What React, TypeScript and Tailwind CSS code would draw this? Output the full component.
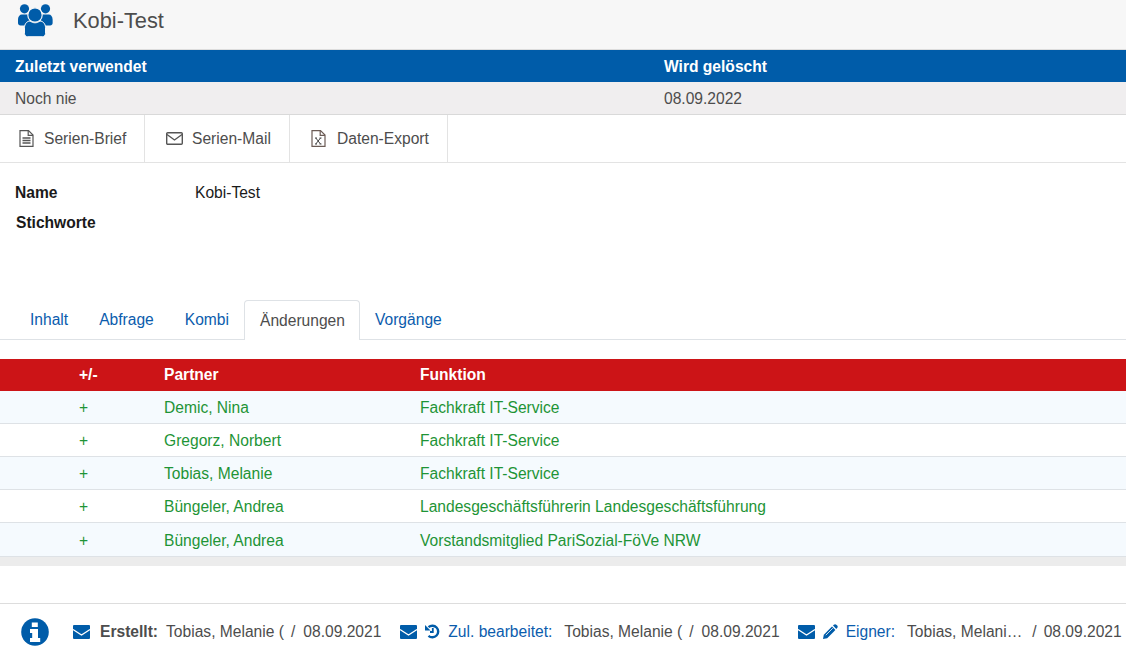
import React from "react";

const rows = [
  ["Demic, Nina", "Fachkraft IT-Service"],
  ["Gregorz, Norbert", "Fachkraft IT-Service"],
  ["Tobias, Melanie", "Fachkraft IT-Service"],
  ["Büngeler, Andrea", "Landesgeschäftsführerin Landesgeschäftsführung"],
  ["Büngeler, Andrea", "Vorstandsmitglied PariSozial-FöVe NRW"],
];

function Users() {
  return (
    <svg viewBox="0 0 35 33" className="w-[35px] h-[33px] text-[#005ca9]" fill="currentColor">
      <circle cx="6.5" cy="4.8" r="4.6" />
      <circle cx="27.5" cy="4.8" r="4.6" />
      <path d="M0 15.5c0-3 1.6-5 4-5h6c2 0 3 1 4 3l-6 8H2.5C1 21.5 0 20.5 0 19z" />
      <path d="M34.6 15.5c0-3-1.6-5-4-5h-6c-2 0-3 1-4 3l6 8h5.500c1.500 0 2.500-1 2.500-2.500z" />
      <circle cx="17" cy="11" r="7.2" stroke="#f7f7f7" strokeWidth="1.2" />
      <path d="M6.500 23.500c0-3.500 2.500-6.500 5.500-6.500 1.500 1 3 1.800 5 1.800s3.500-.8 5-1.800c3 0 5.500 3 5.500 6.500v6c0 2-1.500 3.200-3 3.200H9.500c-1.500 0-3-1.200-3-3.200z" stroke="#f7f7f7" strokeWidth="1" />
    </svg>
  );
}

function Envelope() {
  return (
    <svg viewBox="0 0 17 14" className="w-[17px] h-[14px] shrink-0 text-[#005ca9]">
      <rect width="17" height="14" rx="1" fill="currentColor" />
      <path d="M0 4.500 8.500 10 17 4.500" fill="none" stroke="#fff" strokeWidth="1.300" />
    </svg>
  );
}

function Info() {
  return (
    <svg viewBox="0 0 28 28" className="w-[28px] h-[28px] shrink-0">
      <circle cx="14" cy="14" r="13.800" fill="#005ca9" />
      <path d="M10.800 4.500h6v4.500h-6zM9 11h8v9h2.200v4H9v-4h2.200v-5H9z" fill="#fff" />
    </svg>
  );
}

function HistoryIcon() {
  return (
    <svg viewBox="0 0 15 15" className="w-[15px] h-[15px] shrink-0 text-[#005ca9]" fill="none" stroke="currentColor">
      <path d="M3.500 3.200A5.800 5.800 0 1 1 3.500 11.800" strokeWidth="2.400" />
      <path d="M0 1v5.500h5.500z" fill="currentColor" stroke="none" />
      <path d="M7.800 4v4H5" strokeWidth="1.800" />
    </svg>
  );
}

function Pencil() {
  return (
    <svg viewBox="0 0 15 15" className="w-[15px] h-[15px] shrink-0 text-[#005ca9]" fill="currentColor">
      <path d="M0 15l.8-4.200L9 2.600l3.400 3.400-8.200 8.200z" />
      <path d="M10 1.600l.8-.8c.8-.8 1.800-.8 2.500-.1l.9.900c.7.7.7 1.800-.1 2.500l-.8.800z" />
      <path d="M2.800 11.200l7-7" stroke="#fff" strokeWidth=".8" fill="none" />
    </svg>
  );
}

function FileText() {
  return (
    <svg viewBox="0 0 15 17" className="w-[15px] h-[17px] shrink-0" fill="none" stroke="#555" strokeWidth="1.200">
      <path d="M1 .6h8.500L14 5v11.400H1z" />
      <path d="M9.200.8v4.500H14" />
      <path d="M3.500 8h8M3.500 10.500h8M3.500 13h8" strokeWidth="1.300" />
    </svg>
  );
}

function MailOutline() {
  return (
    <svg viewBox="0 0 17 13" className="w-[17px] h-[13px] shrink-0" fill="none" stroke="#555" strokeWidth="1.400">
      <rect x=".7" y=".7" width="15.600" height="11.600" rx="1" />
      <path d="M1 2.500 8.500 8 16 2.500" />
    </svg>
  );
}

function FileX() {
  return (
    <svg viewBox="0 0 15 17" className="w-[15px] h-[17px] shrink-0" fill="none" stroke="#6b5b55" strokeWidth="1.200">
      <path d="M1 .6h8.500L14 5v11.400H1z" />
      <path d="M9.200.8v4.500H14" />
      <path d="M4.800 8l4.700 6M9.500 8l-4.700 6M4 8h2M8.500 8h2M4 14h2M8.500 14h2" stroke="#444" strokeWidth="1" />
    </svg>
  );
}

export default function App() {
  return (
    <div className="w-[1126px] h-[653px] overflow-hidden bg-white text-[15.6px] text-[#4d4d4d] font-['Liberation_Sans',Arial,sans-serif] flex flex-col">
      <header className="h-[50px] shrink-0 bg-[#f7f7f7] border-b border-[#dddddd] flex items-center pl-[18px] pb-[8px]">
        <Users />
        <span className="ml-[20px] mt-[2px] text-[21.8px] text-[#4d4d4d]">Kobi-Test</span>
      </header>
      <div className="h-[32px] shrink-0 bg-[#005ca9] text-white font-bold grid grid-cols-[649px_1fr] items-center pl-[15px] pt-[1px]">
        <span>Zuletzt verwendet</span>
        <span>Wird gelöscht</span>
      </div>
      <div className="h-[33px] shrink-0 bg-[#f0eeef] border-b border-[#d9d9d9] grid grid-cols-[649px_1fr] items-center pl-[15px] pt-[1px]">
        <span>Noch nie</span>
        <span>08.09.2022</span>
      </div>
      <nav className="h-[48px] shrink-0 border-b border-[#e3e3e3] flex">
        <div className="w-[145px] border-r border-[#e3e3e3] flex items-center pl-[19px] gap-[10px]">
          <FileText /><span>Serien-Brief</span>
        </div>
        <div className="w-[145px] border-r border-[#e3e3e3] flex items-center pl-[21px] gap-[9px]">
          <MailOutline /><span>Serien-Mail</span>
        </div>
        <div className="w-[158px] border-r border-[#e3e3e3] flex items-center pl-[21px] gap-[11px]">
          <FileX /><span>Daten-Export</span>
        </div>
      </nav>
      <section className="h-[137px] shrink-0 pt-[15px] pl-[15px] text-[#1a1a1a]">
        <div className="h-[30px] flex items-center"><b className="w-[180px]">Name</b><span>Kobi-Test</span></div>
        <div className="h-[30px] flex items-center"><b className="w-[180px] pl-[1px]">Stichworte</b></div>
      </section>
      <div className="h-[40px] shrink-0 border-b border-[#dee2e6] flex pl-[15px] text-[#0b5cad]">
        <span className="px-[15px] pt-[8px]">Inhalt</span>
        <span className="ml-[1px] px-[15px] pt-[8px]">Abfrage</span>
        <span className="ml-[1px] px-[15px] pt-[8px]">Kombi</span>
        <span className="h-[40px] pl-[15px] pr-[14px] pt-[8px] text-[#4d4d4d] bg-white border border-b-0 border-[#dee2e6] rounded-t-[4px]">Änderungen</span>
        <span className="px-[15px] pt-[8px]">Vorgänge</span>
      </div>
      <div className="h-[19px] shrink-0" />
      <div className="h-[32px] shrink-0 bg-[#cc1417] text-white font-bold grid grid-cols-[79px_85px_256px_1fr] items-center">
        <span /><span>+/-</span><span>Partner</span><span>Funktion</span>
      </div>
      {rows.map((r, i) => (
        <div key={i} className={`shrink-0 border-b border-[#dee2e6] text-[#1e9436] grid grid-cols-[79px_85px_256px_1fr] items-center ${i === 4 ? "h-[34px] pt-[2px]" : "h-[33px] pt-[1px]"} ${i % 2 === 0 ? "bg-[#f5fafe]" : "bg-white"}`}>
          <span /><span>+</span><span>{r[0]}</span><span>{r[1]}</span>
        </div>
      ))}
      <div className="h-[9px] shrink-0 bg-[#ececec]" />
      <div className="h-[37px] shrink-0" />
      <footer className="h-[50px] shrink-0 border-t border-[#dddddd] flex items-center pl-[21px] pt-[6px] whitespace-nowrap">
        <Info />
        <span className="ml-[24px]"><Envelope /></span>
        <b className="ml-[10px]">Erstellt:</b>
        <span className="ml-[8px]">Tobias, Melanie (</span>
        <span className="ml-[7px]">/</span>
        <span className="ml-[8px]">08.09.2021</span>
        <span className="ml-[19px]"><Envelope /></span>
        <span className="ml-[8px]"><HistoryIcon /></span>
        <span className="ml-[8px] text-[#0b5cad]">Zul. bearbeitet:</span>
        <span className="ml-[12px]">Tobias, Melanie (</span>
        <span className="ml-[7px]">/</span>
        <span className="ml-[8px]">08.09.2021</span>
        <span className="ml-[18px]"><Envelope /></span>
        <span className="ml-[8px]"><Pencil /></span>
        <span className="ml-[8px] text-[#0b5cad]">Eigner:</span>
        <span className="ml-[12px]">Tobias, Melani…</span>
        <span className="ml-[10px]">/</span>
        <span className="ml-[7px]">08.09.2021</span>
      </footer>
    </div>
  );
}
